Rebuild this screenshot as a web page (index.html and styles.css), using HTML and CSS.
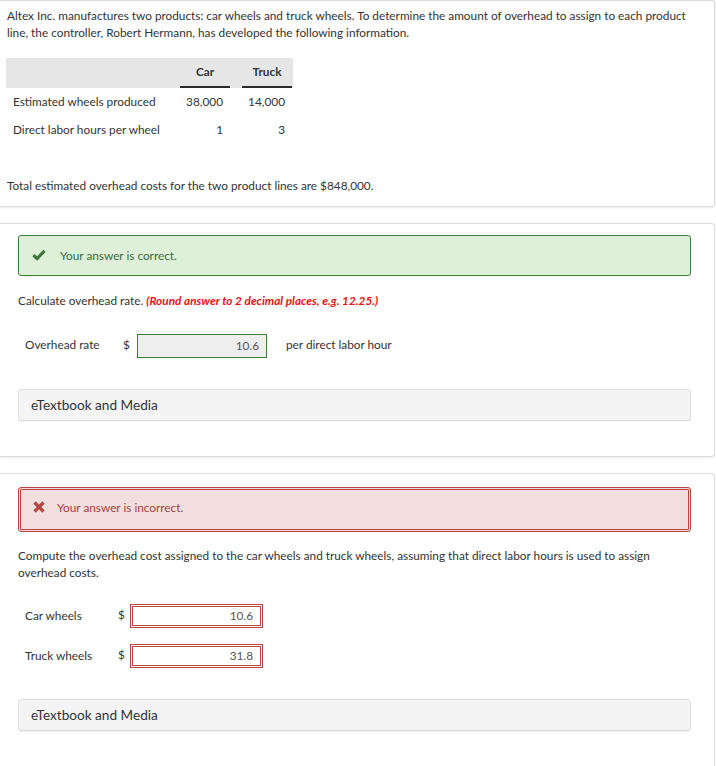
FILE: index.html
```html
<!DOCTYPE html>
<html lang="en">
<head>
<meta charset="utf-8">
<title>Overhead</title>
<link rel="stylesheet" href="styles.css">
</head>
<body>
<section class="card card-intro">
  <p class="intro">Altex Inc. manufactures two products: car wheels and truck wheels. To determine the amount of overhead to assign to each product line, the controller, Robert Hermann, has developed the following information.</p>
  <div class="data">
    <div class="data-head">
      <div class="c-label"></div>
      <div class="c-num th">Car</div>
      <div class="c-num th th-last">Truck</div>
    </div>
    <div class="data-row">
      <div class="c-label">Estimated wheels produced</div>
      <div class="c-num">38,000</div>
      <div class="c-num c-last">14,000</div>
    </div>
    <div class="data-row">
      <div class="c-label">Direct labor hours per wheel</div>
      <div class="c-num">1</div>
      <div class="c-num c-last">3</div>
    </div>
  </div>
  <p class="total">Total estimated overhead costs for the two product lines are $848,000.</p>
</section>

<section class="card card-part">
  <div class="alert alert-ok">
    <svg class="icon icon-check" width="14" height="12" viewBox="0 0 14 12" aria-hidden="true"><path d="M1.5 6.2 L5.2 9.6 L12.5 1.8" fill="none" stroke="#3d763b" stroke-width="3.2" stroke-linejoin="miter"/></svg>
    <span>Your answer is correct.</span>
  </div>
  <p class="prompt">Calculate overhead rate. <em class="hint">(Round answer to 2 decimal places, e.g. 12.25.)</em></p>
  <div class="ans-row ans-row-rate">
    <span class="ans-label lbl-rate">Overhead rate</span>
    <span class="cur cur-rate">$</span>
    <span class="field field-ok">10.6</span>
    <span class="unit">per direct labor hour</span>
  </div>
  <div class="media">eTextbook and Media</div>
</section>

<section class="card card-part card-last">
  <div class="alert alert-bad">
    <svg class="icon icon-x" width="12" height="12" viewBox="0 0 12 12" aria-hidden="true"><path d="M1.5 1.5 L10.5 10.5 M10.5 1.5 L1.5 10.5" fill="none" stroke="#b4443f" stroke-width="3.2"/></svg>
    <span>Your answer is incorrect.</span>
  </div>
  <p class="prompt prompt-bad">Compute the overhead cost assigned to the car wheels and truck wheels, assuming that direct labor hours is used to assign overhead costs.</p>
  <div class="ans-row ans-row-car">
    <span class="ans-label lbl-wheel">Car wheels</span>
    <span class="cur cur-wheel">$</span>
    <span class="field field-bad">10.6</span>
  </div>
  <div class="ans-row ans-row-truck">
    <span class="ans-label lbl-wheel">Truck wheels</span>
    <span class="cur cur-wheel">$</span>
    <span class="field field-bad">31.8</span>
  </div>
  <div class="media media-bad">eTextbook and Media</div>
</section>
</body>
</html>
```

FILE: styles.css
```css
html, body {
  margin: 0;
  padding: 0;
  background: #ffffff;
}

body {
  font-family: Lato, "Liberation Sans", sans-serif;
  font-size: 11.8px;
  line-height: 16.5px;
  color: #333333;
}

p {
  margin: 0;
}

.card {
  background: #ffffff;
  border: 1px solid #dcdcdc;
  border-left: 0;
  border-radius: 0 4px 4px 0;
  margin-right: 1px;
  box-shadow: 0 1px 2px rgba(0, 0, 0, 0.08);
}

.card-intro {
  padding: 7px 7px 11px 7px;
  box-shadow: 0 -1px 2px rgba(0, 0, 0, 0.12), 0 1px 2px rgba(0, 0, 0, 0.08);
}

.intro {
  margin-bottom: 17px;
}

/* data table */
.data {
  width: 287px;
  margin-left: -1px;
}

.data-head {
  display: flex;
  height: 30px;
  background: #e6e6e6;
}

.data-row {
  display: flex;
  height: 28px;
  align-items: center;
}

.c-label {
  width: 167px;
  padding-left: 7px;
}

.c-num {
  width: 43px;
  padding-right: 7px;
  text-align: right;
}

.c-last {
  margin-left: 12px;
}

.th {
  height: 28px;
  line-height: 28px;
  font-weight: 700;
  text-align: center;
  padding-right: 0;
  width: 50px;
  border-bottom: 2px solid #2b2b2b;
}

.th-last {
  margin-left: 12px;
}

.total {
  margin-top: 34px;
}

/* parts */
.card-part {
  margin-top: 16px;
  padding: 11px 23px 35px 18px;
}

.card-last {
  padding-top: 13px;
  padding-bottom: 40px;
}

.alert {
  display: flex;
  align-items: center;
  border-radius: 3px;
}

.alert-ok {
  background: #dff0d8;
  border: 1px solid #3f7d3b;
  padding: 12px 12px 11px 13px;
  color: #3f6a43;
}

.alert-bad {
  background: #f2dede;
  border: 3px double #b8453f;
  padding: 10px 12px 13px 12px;
  color: #a5423f;
}

.icon {
  display: block;
  flex: none;
}

.icon-check {
  margin-right: 14px;
  margin-top: -1px;
}

.icon-x {
  margin-right: 12px;
  margin-top: -2px;
}

.prompt {
  margin-top: 17px;
}

.prompt-bad {
  margin-top: 16px;
}

.hint {
  color: #ee1111;
  font-weight: 700;
  font-style: italic;
}

.ans-row {
  display: flex;
  align-items: center;
  padding-left: 7px;
}

.ans-row-rate {
  margin-top: 24px;
}

.ans-row-car {
  margin-top: 23px;
}

.ans-row-truck {
  margin-top: 16px;
}

.lbl-rate {
  width: 98px;
}

.lbl-wheel {
  width: 93px;
}

.cur {
  width: 14px;
  margin-top: -1px;
}

.cur-wheel {
  width: 12px;
}

.field {
  display: block;
  box-sizing: border-box;
  height: 24px;
  line-height: 22px;
  text-align: right;
  color: #555555;
}

.field-ok {
  width: 130px;
  background: #eeeeee;
  border: 1px solid #3f7d3b;
  padding-right: 7px;
}

.field-bad {
  width: 133px;
  background: #ffffff;
  border: 3px double #b8453f;
  line-height: 18px;
  padding-right: 7px;
}

.unit {
  margin-left: 19px;
}

.media {
  margin-top: 31px;
  background: #f4f4f4;
  border: 1px solid #dddddd;
  border-radius: 3px;
  box-shadow: 0 1px 1px rgba(0, 0, 0, 0.06);
  padding: 6px 12px;
  font-size: 13.6px;
  line-height: 18px;
  color: #333333;
}

.media-bad {
  margin-top: 31px;
}
```
